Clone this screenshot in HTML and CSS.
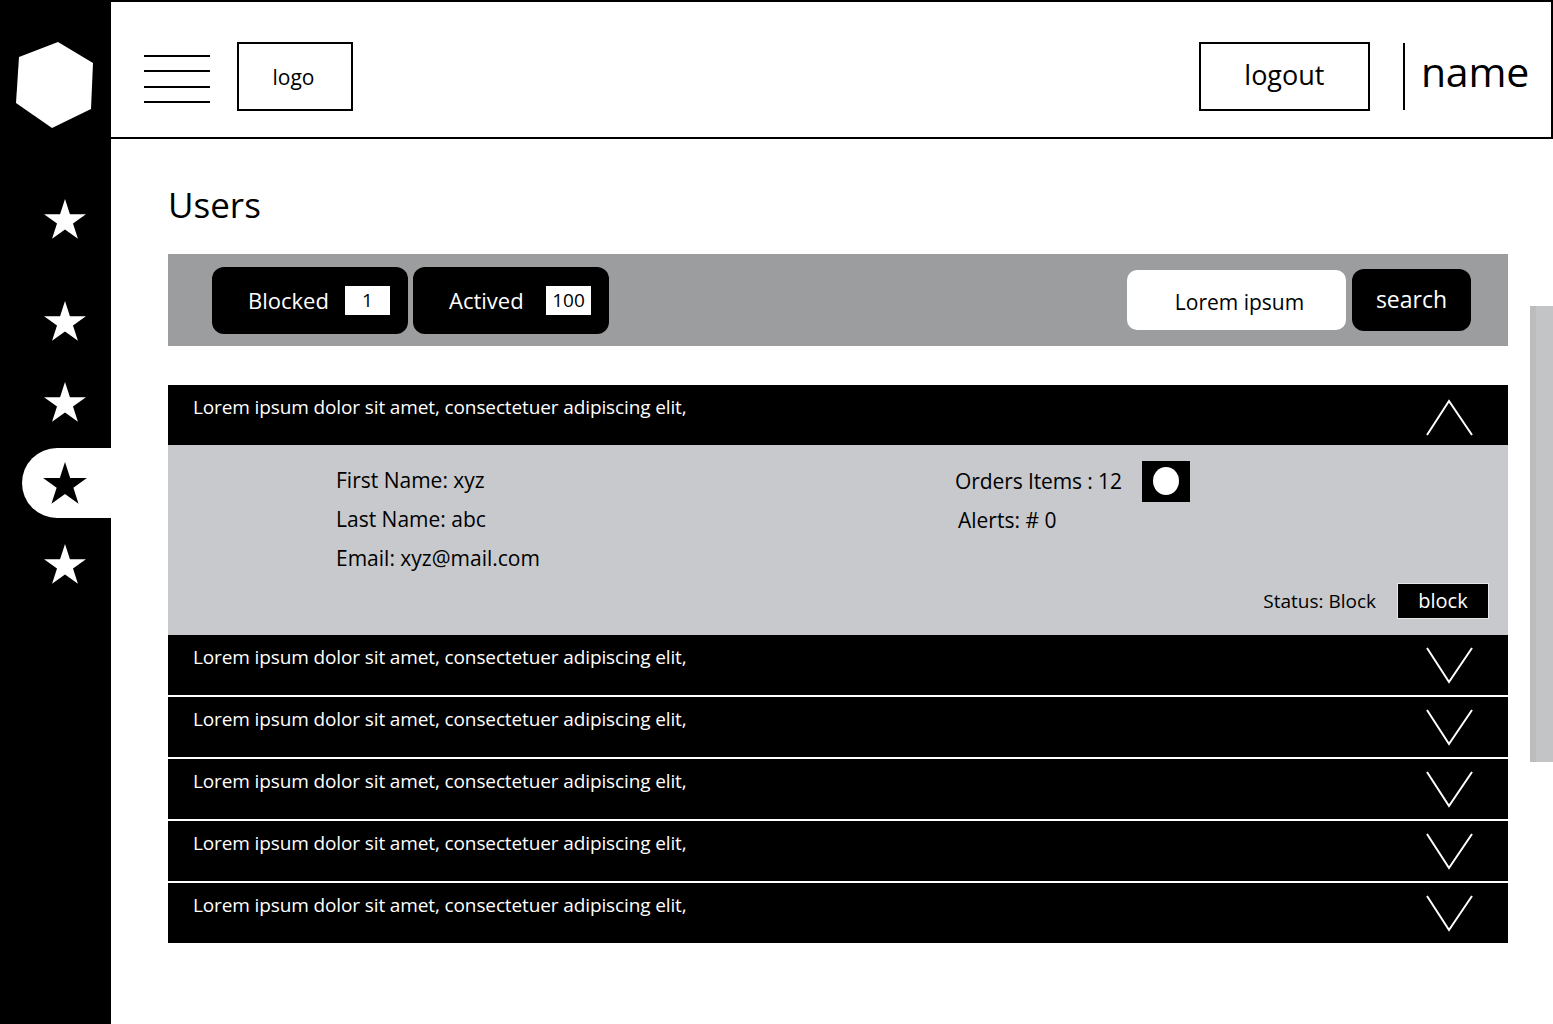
FILE: index.html
```html
<!DOCTYPE html>
<html lang="en">
<head>
<meta charset="utf-8">
<title>Users</title>
<link rel="stylesheet" href="styles.css">
</head>
<body>
<div class="app">
  <aside class="sidebar">
    <svg class="hex" width="111" height="140" viewBox="0 0 111 140"><polygon points="58,42 93,63 91,109 52,128 16,103 19,57" fill="#fff"/></svg>
    <nav class="nav">
      <div class="nav-item first"><svg class="star" width="42" height="40" viewBox="0 0 42 40"><polygon points="21,0 25.94,15.2 41.92,15.2 28.99,24.6 33.93,39.8 21,30.4 8.07,39.8 13.01,24.6 0.08,15.2 16.06,15.2"/></svg></div>
      <div class="nav-item"><svg class="star" width="42" height="40" viewBox="0 0 42 40"><polygon points="21,0 25.94,15.2 41.92,15.2 28.99,24.6 33.93,39.8 21,30.4 8.07,39.8 13.01,24.6 0.08,15.2 16.06,15.2"/></svg></div>
      <div class="nav-item"><svg class="star" width="42" height="40" viewBox="0 0 42 40"><polygon points="21,0 25.94,15.2 41.92,15.2 28.99,24.6 33.93,39.8 21,30.4 8.07,39.8 13.01,24.6 0.08,15.2 16.06,15.2"/></svg></div>
      <div class="nav-item active"><div class="pill"><svg class="star" width="44" height="42" viewBox="0 0 42 40"><polygon points="21,0 25.94,15.2 41.92,15.2 28.99,24.6 33.93,39.8 21,30.4 8.07,39.8 13.01,24.6 0.08,15.2 16.06,15.2"/></svg></div></div>
      <div class="nav-item"><svg class="star" width="42" height="40" viewBox="0 0 42 40"><polygon points="21,0 25.94,15.2 41.92,15.2 28.99,24.6 33.93,39.8 21,30.4 8.07,39.8 13.01,24.6 0.08,15.2 16.06,15.2"/></svg></div>
    </nav>
  </aside>
  <main class="main">
    <header class="topbar">
      <div class="burger"><span></span><span></span><span></span><span></span></div>
      <div class="logo">logo</div>
      <div class="spacer"></div>
      <div class="logout">logout</div>
      <div class="divider"></div>
      <div class="name">name</div>
    </header>
    <section class="content">
      <h1 class="title">Users</h1>
      <div class="filters">
        <div class="tab">Blocked <span class="count">1</span></div>
        <div class="tab">Actived <span class="count">100</span></div>
        <div class="spacer"></div>
        <div class="search-input">Lorem ipsum</div>
        <div class="search-btn">search</div>
      </div>
      <div class="list">
        <div class="row open">
          <div class="row-head">
            <span class="row-text">Lorem ipsum dolor sit amet, consectetuer adipiscing elit,</span>
            <svg class="chev" width="47" height="37" viewBox="0 0 47 37"><polyline points="1,36 23,2 46,36" fill="none" stroke="#fff" stroke-width="2"/></svg>
          </div>
          <div class="details">
            <div class="info">
              <div class="col-left">
                <div class="line">First Name: xyz</div>
                <div class="line">Last Name: abc</div>
                <div class="line">Email: xyz@mail.com</div>
              </div>
              <div class="col-right">
                <div class="orders">Orders Items : 12 <span class="toggle"><span class="dot"></span></span></div>
                <div class="alerts">Alerts: # 0</div>
              </div>
            </div>
            <div class="status">Status: Block <span class="block-btn">block</span></div>
          </div>
        </div>
        <div class="row">
          <div class="row-head">
            <span class="row-text">Lorem ipsum dolor sit amet, consectetuer adipiscing elit,</span>
            <svg class="chev" width="47" height="37" viewBox="0 0 47 37"><polyline points="1,1 23,35 46,1" fill="none" stroke="#fff" stroke-width="2"/></svg>
          </div>
        </div>
        <div class="row">
          <div class="row-head">
            <span class="row-text">Lorem ipsum dolor sit amet, consectetuer adipiscing elit,</span>
            <svg class="chev" width="47" height="37" viewBox="0 0 47 37"><polyline points="1,1 23,35 46,1" fill="none" stroke="#fff" stroke-width="2"/></svg>
          </div>
        </div>
        <div class="row">
          <div class="row-head">
            <span class="row-text">Lorem ipsum dolor sit amet, consectetuer adipiscing elit,</span>
            <svg class="chev" width="47" height="37" viewBox="0 0 47 37"><polyline points="1,1 23,35 46,1" fill="none" stroke="#fff" stroke-width="2"/></svg>
          </div>
        </div>
        <div class="row">
          <div class="row-head">
            <span class="row-text">Lorem ipsum dolor sit amet, consectetuer adipiscing elit,</span>
            <svg class="chev" width="47" height="37" viewBox="0 0 47 37"><polyline points="1,1 23,35 46,1" fill="none" stroke="#fff" stroke-width="2"/></svg>
          </div>
        </div>
        <div class="row">
          <div class="row-head">
            <span class="row-text">Lorem ipsum dolor sit amet, consectetuer adipiscing elit,</span>
            <svg class="chev" width="47" height="37" viewBox="0 0 47 37"><polyline points="1,1 23,35 46,1" fill="none" stroke="#fff" stroke-width="2"/></svg>
          </div>
        </div>
      </div>
    </section>
    <div class="scrollbar"></div>
  </main>
</div>
</body>
</html>
```
FILE: styles.css
```css
* { box-sizing: border-box; }
html, body { margin: 0; padding: 0; }
body {
  width: 1553px;
  height: 1024px;
  overflow: hidden;
  background: #fff;
  font-family: "Open Sans", "Noto Sans", sans-serif;
  color: #000;
}
.app { display: flex; height: 1024px; }
.sidebar {
  width: 111px;
  flex: none;
  background: #000;
  display: flex;
  flex-direction: column;
}
.hex { display: block; }
.nav { margin-top: 38px; display: flex; flex-direction: column; }
.nav-item {
  height: 81px;
  display: flex;
  align-items: center;
  padding-left: 44px;
}
.nav-item.first { margin-bottom: 21px; }
.star { display: block; fill: #fff; }
.nav-item.active { padding-left: 22px; }
.pill {
  width: 89px;
  height: 70px;
  background: #fff;
  border-radius: 35px 0 0 35px;
  display: flex;
  align-items: center;
  padding-left: 21px;
}
.pill .star { fill: #000; }

.main { flex: 1; position: relative; display: flex; flex-direction: column; }
.topbar {
  height: 139px;
  border: 2px solid #000;
  border-left: none;
  display: flex;
  align-items: flex-start;
  padding: 40px 22px 0 33px;
}
.burger {
  width: 66px;
  margin-top: 13px;
  display: flex;
  flex-direction: column;
  gap: 13.4px;
}
.burger span { display: block; height: 2px; background: #000; }
.logo {
  margin-left: 27px;
  width: 116px;
  height: 69px;
  border: 2px solid #000;
  display: flex;
  align-items: center;
  justify-content: center;
  font-size: 21px;
  padding-right: 3px;
}
.spacer { flex: 1; }
.logout {
  width: 171px;
  height: 69px;
  border: 2px solid #000;
  display: flex;
  align-items: center;
  justify-content: center;
  font-size: 27px;
  padding-bottom: 4px;
}
.divider {
  width: 2px;
  height: 67px;
  margin: 1px 0 0 33px;
  background: #000;
}
.name {
  margin-left: 16px;
  font-size: 41px;
  line-height: 58px;
  letter-spacing: -0.2px;
}

.content { padding: 0 45px 0 57px; }
.title {
  margin: 38px 0 0 0;
  font-size: 35px;
  font-weight: 400;
  line-height: 56px;
}
.filters {
  margin-top: 21px;
  height: 92px;
  background: #9b9d9f;
  display: flex;
  align-items: center;
  padding: 0 37px 0 44px;
}
.tab {
  width: 196px;
  height: 67px;
  background: #000;
  color: #fff;
  border-radius: 12px;
  display: flex;
  align-items: center;
  justify-content: space-between;
  padding: 0 18px 0 36px;
  font-size: 22px;
  margin-right: 5px;
}
.count {
  width: 45px;
  height: 29px;
  background: #fff;
  color: #000;
  display: flex;
  align-items: center;
  justify-content: center;
  font-size: 19px;
}
.search-input {
  width: 219px;
  height: 60px;
  background: #fff;
  border-radius: 10px;
  display: flex;
  align-items: center;
  justify-content: center;
  font-size: 21px;
  padding-top: 4px;
  padding-left: 6px;
}
.search-btn {
  margin-left: 6px;
  width: 119px;
  height: 62px;
  background: #000;
  color: #fff;
  border-radius: 12px;
  display: flex;
  align-items: center;
  justify-content: center;
  font-size: 23px;
  padding-bottom: 3px;
}

.list { margin-top: 39px; display: flex; flex-direction: column; }
.row + .row { margin-top: 2px; }
.row.open + .row { margin-top: 0; }
.row-head {
  height: 60px;
  background: #000;
  color: #fff;
  display: flex;
  align-items: flex-start;
  justify-content: space-between;
  padding: 9px 35px 0 25px;
}
.row-text { font-size: 19px; line-height: 26px; letter-spacing: -0.12px; }
.chev { display: block; margin-top: 3px; }
.row.open .chev { margin-top: 5px; }
.details {
  height: 190px;
  background: #c7c9cc;
  display: flex;
  flex-direction: column;
  padding: 16px 19px 16px 168px;
}
.info { display: flex; }
.col-left { width: 619px; }
.line { font-size: 21px; line-height: 39px; }
.col-right { display: flex; flex-direction: column; }
.orders {
  display: flex;
  align-items: center;
  font-size: 21px;
  height: 42px;
  padding-bottom: 2px;
  letter-spacing: -0.1px;
}
.toggle {
  margin-left: 20px;
  width: 48px;
  height: 41px;
  background: #000;
  display: flex;
  align-items: center;
  justify-content: center;
}
.dot { width: 26px; height: 28px; border-radius: 50%; background: #fff; }
.alerts { font-size: 21px; line-height: 34px; margin-left: 3px; }
.status {
  margin-top: auto;
  align-self: flex-end;
  display: flex;
  align-items: center;
  font-size: 19px;
}
.block-btn {
  margin-left: 21px;
  width: 92px;
  height: 36px;
  background: #000;
  color: #fff;
  border: 1px solid #e6e6e6;
  display: flex;
  align-items: center;
  justify-content: center;
  font-size: 20px;
  padding-bottom: 2px;
}
.scrollbar {
  position: absolute;
  left: 1419px;
  top: 306px;
  width: 23px;
  height: 456px;
  background: #c3c4c6;
  border-left: 6px solid #bbbcbe;
}
```
